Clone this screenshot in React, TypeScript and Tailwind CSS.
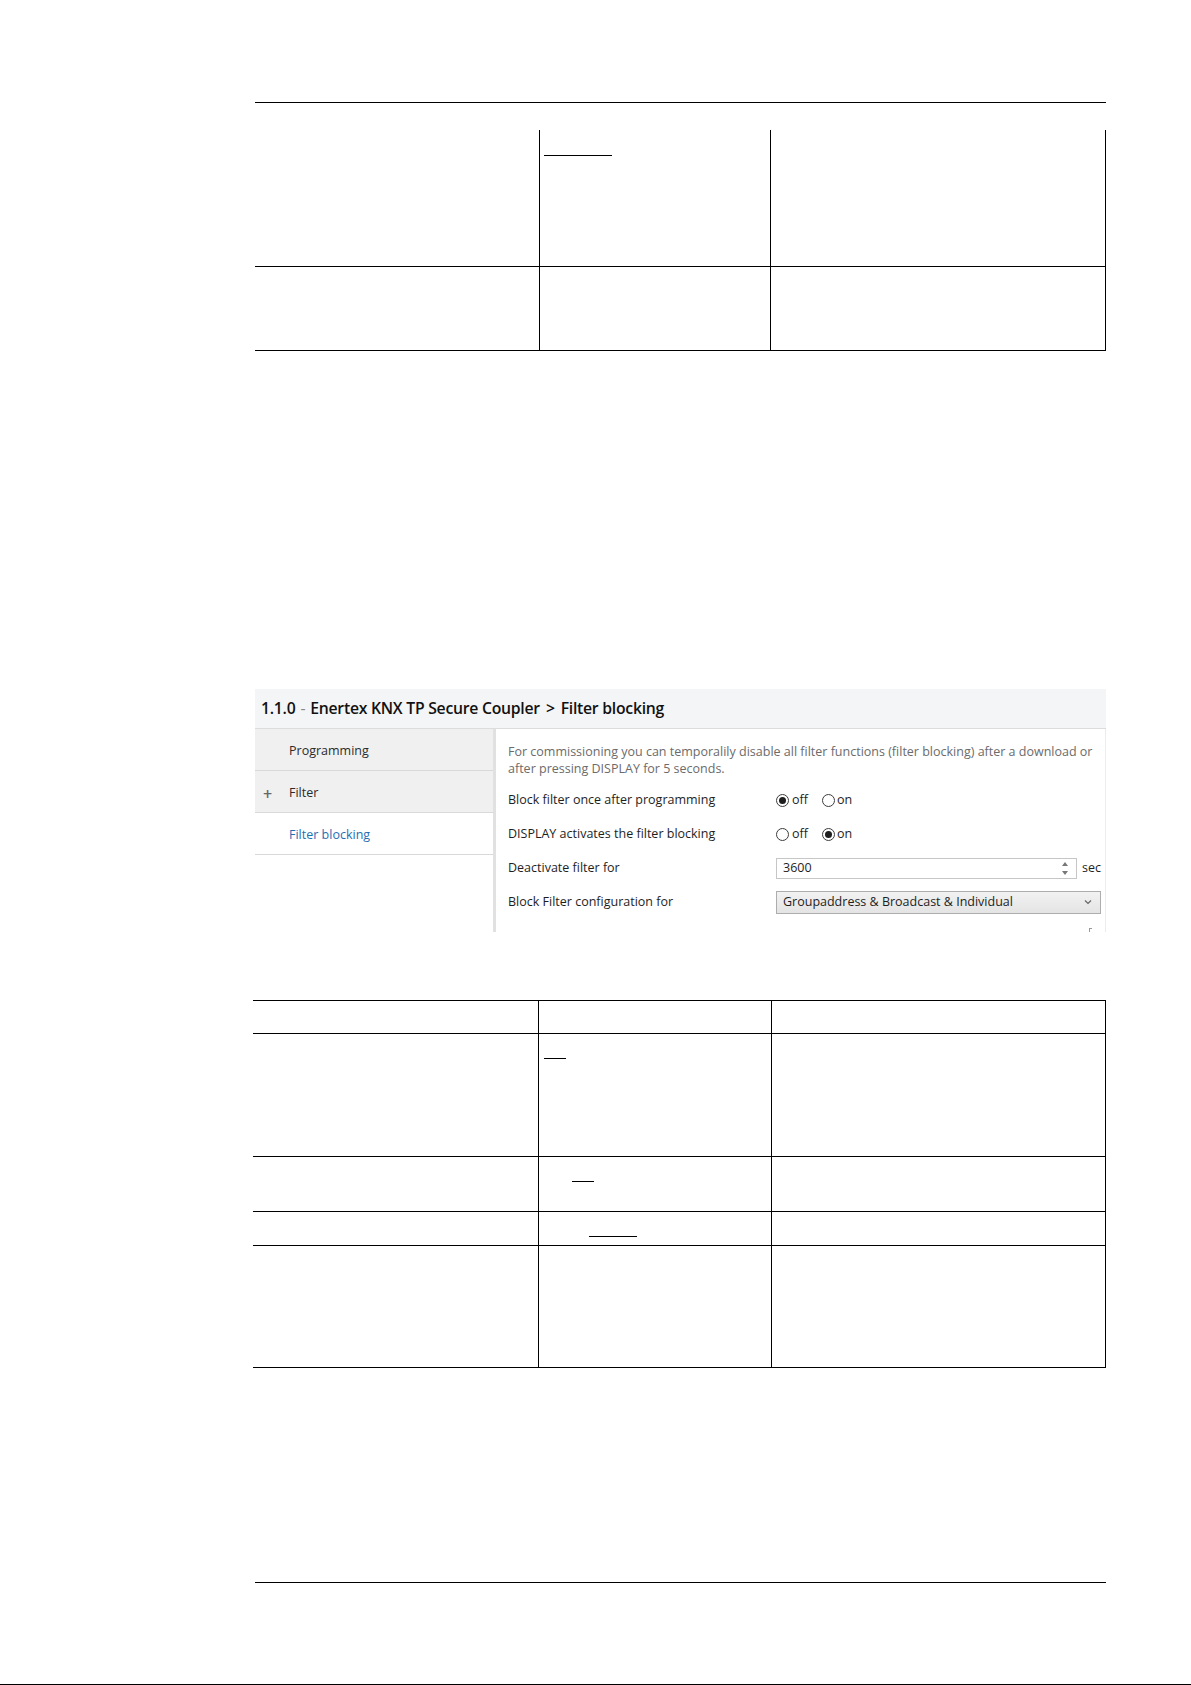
import type { ReactNode } from "react";

const UI_FONT = "font-['Open_Sans','Noto_Sans',sans-serif]";

/** A thin underline as it shows in the spec table cells (underlined blank text). */
function Underline({ w }: { w: string }) {
  return <div className={`h-px bg-black ${w}`} />;
}

function Radio({ checked }: { checked?: boolean }) {
  return (
    <span className="flex h-[13px] w-[13px] items-center justify-center rounded-full border border-[#3c3c3c] bg-white">
      {checked ? <span className="h-[7px] w-[7px] rounded-full bg-[#1e1e1e]" /> : null}
    </span>
  );
}

function RadioPair({ value }: { value: "off" | "on" }) {
  return (
    <div className="flex items-center text-[12.5px] text-[#1e1e1e]">
      <Radio checked={value === "off"} />
      <span className="ml-[3px]">off</span>
      <span className="ml-[14px]" />
      <Radio checked={value === "on"} />
      <span className="ml-[2px]">on</span>
    </div>
  );
}

function ParamRow({ label, children }: { label: string; children: ReactNode }) {
  return (
    <div className="flex h-[34px] items-center">
      <div className="w-[268px] shrink-0 text-[12.5px] text-[#1e1e1e]">{label}</div>
      {children}
    </div>
  );
}

function NavItem({ label, active, plus }: { label: string; active?: boolean; plus?: boolean }) {
  return (
    <div
      className={`flex h-[42px] items-center border-b border-[#d9d9d9] pt-[4px] text-[12.5px] ${
        active ? "bg-white text-[#1f6fb4]" : "bg-[#f0f0f0] text-[#2b2b2b]"
      }`}
    >
      <span className="w-[34px] pl-[8px] text-[16px] font-semibold leading-none text-[#666]">{plus ? "+" : ""}</span>
      <span>{label}</span>
    </div>
  );
}

function EtsPanel() {
  return (
    <div className={`ml-[255px] w-[851px] ${UI_FONT}`}>
      <div className="flex h-[40px] items-center border-b border-[#dcdcdc] bg-[#f4f5f6] pl-[6px] pt-[1px] text-[15.75px] font-semibold tracking-[-0.25px] text-[#111]">
        <span>1.1.0</span>
        <span className="mx-[5px] font-normal text-[#888]">-</span>
        <span>Enertex KNX TP Secure Coupler</span>
        <span className="mx-[6px]">&gt;</span>
        <span>Filter blocking</span>
      </div>
      <div className="flex h-[203px]">
        <div className="w-[238px] shrink-0">
          <NavItem label="Programming" />
          <NavItem label="Filter" plus />
          <NavItem label="Filter blocking" active />
        </div>
        <div className="w-[3px] shrink-0 bg-[#e1e1e1]" />
        <div className="relative flex-1 border-r border-[#ececec] pl-[12px] pt-[14px]">
          <p className="text-[12.5px] leading-[17px] text-[#6b6b6b]">
            For commissioning you can temporalily disable all filter functions (filter blocking) after a download or
            <br />
            after pressing DISPLAY for 5 seconds.
          </p>
          <div className="mt-[6px]">
            <ParamRow label="Block filter once after programming">
              <RadioPair value="off" />
            </ParamRow>
            <ParamRow label="DISPLAY activates the filter blocking">
              <RadioPair value="on" />
            </ParamRow>
            <ParamRow label="Deactivate filter for">
              <div className="flex h-[21px] w-[301px] items-center justify-between border border-[#c6c6c6] bg-white pl-[6px] pr-[8px] text-[12.5px] text-[#1e1e1e]">
                <span>3600</span>
                <span className="flex flex-col items-center gap-[5px]">
                  <svg width="6" height="4" viewBox="0 0 6 4">
                    <path d="M0 4 L3 0 L6 4 Z" fill="#777" />
                  </svg>
                  <svg width="6" height="4" viewBox="0 0 6 4">
                    <path d="M0 0 L3 4 L6 0 Z" fill="#777" />
                  </svg>
                </span>
              </div>
              <span className="ml-[5px] text-[12.5px] text-[#1e1e1e]">sec</span>
            </ParamRow>
            <ParamRow label="Block Filter configuration for">
              <div className="flex h-[23px] w-[325px] items-center justify-between border border-[#adadad] bg-gradient-to-b from-[#f2f2f2] to-[#e4e4e4] pl-[6px] pr-[8px] text-[12.5px] text-[#1e1e1e]">
                <span>Groupaddress &amp; Broadcast &amp; Individual</span>
                <svg width="8" height="6" viewBox="0 0 8 6">
                  <path d="M1 1.5 L4 4.5 L7 1.5" fill="none" stroke="#666" strokeWidth="1.2" />
                </svg>
              </div>
            </ParamRow>
          </div>
          <span className="absolute bottom-0 right-[13px] h-[4px] w-[3px] border-l border-t border-[#999]" />
        </div>
      </div>
    </div>
  );
}

export default function App() {
  return (
    <div className="flex h-[1685px] w-[1191px] flex-col bg-white pt-[102px]">
      {/* page header rule */}
      <div className="ml-[255px] h-px w-[851px] bg-black" />

      {/* table continued from the previous page */}
      <div className="ml-[255px] mt-[27px] grid w-[851px] grid-cols-[285px_231px_335px]">
        <div className="h-[137px] border-b border-r border-black" />
        <div className="h-[137px] border-b border-r border-black pl-[4px] pt-[25px]">
          <Underline w="w-[68px]" />
        </div>
        <div className="h-[137px] border-b border-r border-black" />
        <div className="h-[84px] border-b border-r border-black" />
        <div className="h-[84px] border-b border-r border-black" />
        <div className="h-[84px] border-b border-r border-black" />
      </div>

      <div className="mt-[338px]">
        <EtsPanel />
      </div>

      {/* parameter table */}
      <div className="ml-[253px] mt-[68px] grid w-[853px] grid-cols-[286px_233px_334px] border-t border-black">
        <div className="h-[33px] border-b border-r border-black" />
        <div className="h-[33px] border-b border-r border-black" />
        <div className="h-[33px] border-b border-r border-black" />

        <div className="h-[123px] border-b border-r border-black" />
        <div className="h-[123px] border-b border-r border-black pl-[5px] pt-[24px]">
          <Underline w="w-[22px]" />
        </div>
        <div className="h-[123px] border-b border-r border-black" />

        <div className="h-[55px] border-b border-r border-black" />
        <div className="h-[55px] border-b border-r border-black pl-[33px] pt-[24px]">
          <Underline w="w-[22px]" />
        </div>
        <div className="h-[55px] border-b border-r border-black" />

        <div className="h-[34px] border-b border-r border-black" />
        <div className="h-[34px] border-b border-r border-black pl-[50px] pt-[24px]">
          <Underline w="w-[48px]" />
        </div>
        <div className="h-[34px] border-b border-r border-black" />

        <div className="h-[122px] border-b border-r border-black" />
        <div className="h-[122px] border-b border-r border-black" />
        <div className="h-[122px] border-b border-r border-black" />
      </div>

      {/* page footer rule */}
      <div className="ml-[255px] mt-[214px] h-px w-[851px] bg-black" />

      <div className="mt-auto h-px w-full bg-black" />
    </div>
  );
}
